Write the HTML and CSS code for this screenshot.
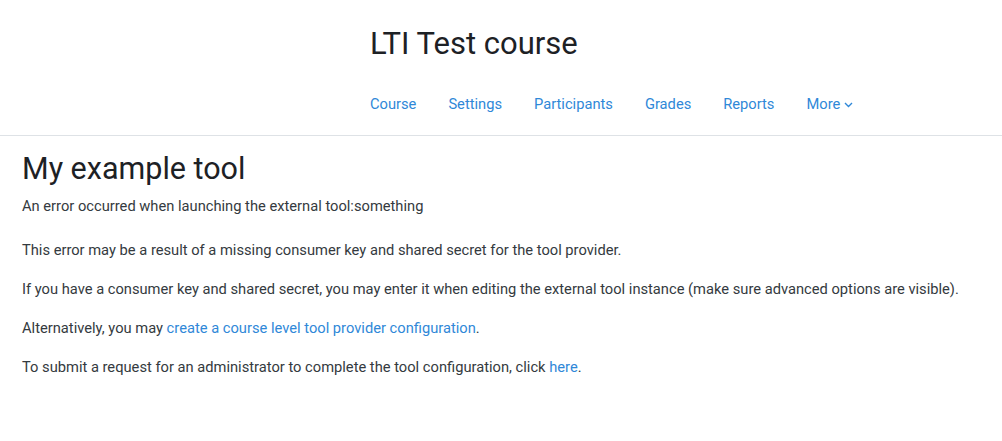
FILE: index.html
```html
<!DOCTYPE html>
<html>
<head>
<meta charset="utf-8">
<link rel="stylesheet" href="styles.css">
</head>
<body>
<header class="page-header">
  <div class="header-inner">
    <h1 class="course-title">LTI Test course</h1>
    <nav class="secondary-nav">
      <a class="nav-link" href="#">Course</a>
      <a class="nav-link" href="#">Settings</a>
      <a class="nav-link" href="#">Participants</a>
      <a class="nav-link" href="#">Grades</a>
      <a class="nav-link" href="#">Reports</a>
      <a class="nav-link" href="#">More <svg class="caret" width="9" height="6" viewBox="0 0 9 6"><path d="M1 1 L4.5 4.5 L8 1" fill="none" stroke="currentColor" stroke-width="1.4"/></svg></a>
    </nav>
  </div>
</header>
<main class="content">
  <h2 class="tool-title">My example tool</h2>
  <p class="error-line">An error occurred when launching the external tool:something</p>
  <p>This error may be a result of a missing consumer key and shared secret for the tool provider.</p>
  <p>If you have a consumer key and shared secret, you may enter it when editing the external tool instance (make sure advanced options are visible).</p>
  <p>Alternatively, you may <a href="#">create a course level tool provider configuration</a>.</p>
  <p>To submit a request for an administrator to complete the tool configuration, click <a href="#">here</a>.</p>
</main>
</body>
</html>
```

FILE: styles.css
```css
* { box-sizing: border-box; }
html, body { margin: 0; padding: 0; background: #fff; }
body {
  font-family: Roboto, "Liberation Sans", sans-serif;
  font-size: 14.7px;
  line-height: 22.5px;
  color: #343a40;
}
a { color: #2f88d8; text-decoration: none; }
.page-header {
  border-bottom: 1px solid #dee2e6;
}
.header-inner {
  padding-left: 370px;
  padding-top: 25px;
  height: 135px;
}
.course-title {
  margin: 0;
  font-size: 31px;
  font-weight: 400;
  line-height: 37px;
  color: #1d2125;
}
.secondary-nav {
  display: flex;
  margin-top: 31px;
  margin-left: -16px;
}
.nav-link {
  padding: 0 16px;
  color: #2f88d8;
  display: inline-flex;
  align-items: center;
  gap: 4px;
}
.caret { margin-top: 1px; }
.content {
  padding: 15px 22px 0;
}
.tool-title {
  margin: 0 0 8px;
  font-size: 30.5px;
  font-weight: 400;
  line-height: 36px;
  color: #1d2125;
}
.content p { margin: 0 0 16.5px; }
.content .error-line { margin-bottom: 21px; }
```
